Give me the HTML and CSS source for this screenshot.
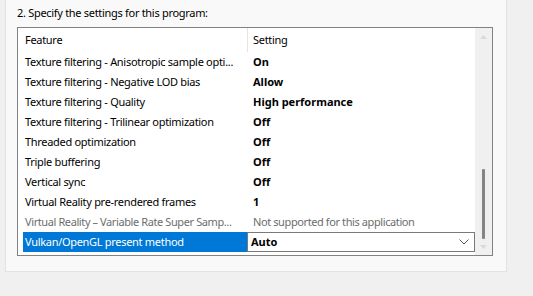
FILE: index.html
```html
<!DOCTYPE html>
<html lang="en">
<head>
    <meta charset="UTF-8">
    <title>Program Settings</title>
    <link rel="stylesheet" href="styles.css">
</head>
<body>

    <div class="panel">
        <p class="step">2. Specify the settings for this program:</p>

        <!-- Settings list -->
        <div class="listbox">
            <div class="table">
                <div class="row head">
                    <div class="cell feature">Feature</div>
                    <div class="cell setting">Setting</div>
                </div>
                <div class="row">
                    <div class="cell feature">Texture filtering - Anisotropic sample opti...</div>
                    <div class="cell setting">On</div>
                </div>
                <div class="row">
                    <div class="cell feature">Texture filtering - Negative LOD bias</div>
                    <div class="cell setting">Allow</div>
                </div>
                <div class="row">
                    <div class="cell feature">Texture filtering - Quality</div>
                    <div class="cell setting">High performance</div>
                </div>
                <div class="row">
                    <div class="cell feature">Texture filtering - Trilinear optimization</div>
                    <div class="cell setting">Off</div>
                </div>
                <div class="row">
                    <div class="cell feature">Threaded optimization</div>
                    <div class="cell setting">Off</div>
                </div>
                <div class="row">
                    <div class="cell feature">Triple buffering</div>
                    <div class="cell setting">Off</div>
                </div>
                <div class="row">
                    <div class="cell feature">Vertical sync</div>
                    <div class="cell setting">Off</div>
                </div>
                <div class="row">
                    <div class="cell feature">Virtual Reality pre-rendered frames</div>
                    <div class="cell setting">1</div>
                </div>
                <div class="row disabled">
                    <div class="cell feature">Virtual Reality – Variable Rate Super Samp...</div>
                    <div class="cell setting">Not supported for this application</div>
                </div>
                <div class="row selected">
                    <div class="cell feature"><span class="highlight">Vulkan/OpenGL present method</span></div>
                    <div class="cell setting">
                        <div class="combo">
                            <span>Auto</span>
                            <svg width="10" height="6" viewBox="0 0 10 6"><path d="M0.5 0.5 L5 5 L9.5 0.5" fill="none" stroke="#555" stroke-width="1"/></svg>
                        </div>
                    </div>
                </div>
            </div>

            <!-- Scrollbar -->
            <div class="scrollbar">
                <svg class="arrow" width="7" height="4" viewBox="0 0 7 4"><path d="M0 4 L3.5 0 L7 4 Z" fill="#dadada"/></svg>
                <div class="track">
                    <div class="thumb"></div>
                </div>
                <svg class="arrow" width="7" height="4" viewBox="0 0 7 4"><path d="M0 0 L3.5 4 L7 0 Z" fill="#dadada"/></svg>
            </div>
        </div>
    </div>

</body>
</html>
```

FILE: styles.css
```css
/* Basic styles */
body {
    font-family: 'Noto Sans', 'Open Sans', sans-serif;
    font-size: 11px;
    letter-spacing: -0.3px;
    background-color: #f0f0f0;
    color: #000;
    margin: 0;
    padding: 0;
}

.panel {
    margin-left: 5px;
    width: 500px;
    height: 271px;
    background-color: #f9f9f9;
    border: 1px solid #e2e2e2;
    border-top: none;
}

.step {
    margin: 0;
    padding: 5px 0 0 11px;
    height: 22px;
    line-height: 16px;
}

/* List box */
.listbox {
    margin-left: 11px;
    width: 474px;
    height: 227px;
    border: 1px solid #828282;
    background-color: #ffffff;
    display: flex;
}

.table {
    width: 457px;
}

.row {
    display: grid;
    grid-template-columns: 229px 228px;
    height: 20px;
    line-height: 20px;
}

.row.head {
    height: 24px;
    line-height: 24px;
}

.row.head .setting {
    border-left: 1px solid #e5e5e5;
    padding-left: 5px;
}

.cell {
    white-space: nowrap;
    overflow: hidden;
    text-overflow: ellipsis;
}

.feature {
    padding-left: 7px;
    padding-right: 2px;
}

.setting {
    padding-left: 6px;
    font-weight: 700;
    letter-spacing: 0;
}

.head .setting {
    font-weight: 400;
    letter-spacing: -0.3px;
}

.disabled .cell {
    color: #6d6d6d;
    font-weight: 400;
    letter-spacing: -0.4px;
}

/* Selected row */
.selected .feature {
    padding-left: 5px;
    padding-right: 0;
}

.highlight {
    display: block;
    background-color: #0078d7;
    color: #ffffff;
    padding-left: 2px;
}

.selected .setting {
    padding-left: 0;
}

.combo {
    display: flex;
    justify-content: space-between;
    align-items: center;
    height: 18px;
    line-height: 18px;
    border: 1px solid #7a7a7a;
    padding: 0 5px 0 3px;
}

/* Scrollbar */
.scrollbar {
    width: 17px;
    background-color: #f0f0f0;
    display: flex;
    flex-direction: column;
    align-items: center;
    padding: 7px 0 6px;
}

.track {
    flex: 1;
    position: relative;
    width: 100%;
}

.thumb {
    position: absolute;
    left: 7px;
    top: 130px;
    width: 3px;
    height: 70px;
    background-color: #858585;
    border-radius: 1px;
}
```
